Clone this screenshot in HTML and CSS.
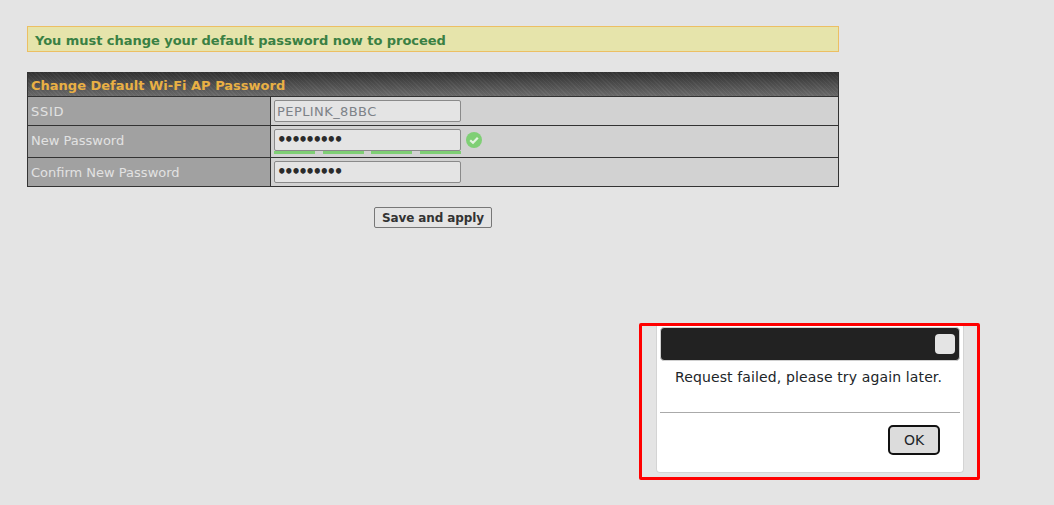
FILE: index.html
```html
<!DOCTYPE html>
<html lang="en">
<head>
<meta charset="utf-8">
<title>Change Default Wi-Fi AP Password</title>
<link rel="stylesheet" href="styles.css">
</head>
<body>
<main class="page">
  <div class="notice">You must change your default password now to proceed</div>
  <form class="panel" onsubmit="return false">
    <div class="panel-title">Change Default Wi-Fi AP Password</div>
    <div class="row row-ssid">
      <label class="row-label">SSID</label>
      <div class="row-field"><input class="text-input is-muted" type="text" value="PEPLINK_8BBC"></div>
    </div>
    <div class="row row-new">
      <label class="row-label">New Password</label>
      <div class="row-field">
        <div class="input-wrap">
          <input class="text-input is-secret" type="password" value="123456789">
          <div class="strength"><span></span><span></span><span></span><span></span></div>
        </div>
        <svg class="check" width="16" height="16" viewBox="0 0 16 16" aria-hidden="true">
          <circle cx="8" cy="8" r="8" fill="#7fcf75"/>
          <path d="M4.2 8.2 7 10.8 11.8 5.7" fill="none" stroke="#e4f3e1" stroke-width="2.2"/>
        </svg>
      </div>
    </div>
    <div class="row row-confirm">
      <label class="row-label">Confirm New Password</label>
      <div class="row-field"><input class="text-input is-secret" type="password" value="123456789"></div>
    </div>
  </form>
  <div class="actions"><button class="save-btn" type="button">Save and apply</button></div>
</main>
<div class="highlight">
  <div class="dialog">
    <div class="dialog-head"><span class="dialog-close"></span></div>
    <p class="dialog-text">Request failed, please try again later.</p>
    <div class="dialog-foot"><button class="ok-btn" type="button">OK</button></div>
  </div>
</div>
</body>
</html>
```
FILE: styles.css
```css
* { box-sizing: border-box; }
html, body { height: 100%; }
body {
  margin: 0;
  background: #e4e4e4;
  font-family: "DejaVu Sans", Verdana, sans-serif;
  font-size: 13px;
  color: #333;
  overflow: hidden;
}
.page { width: 812px; margin-left: 27px; padding-top: 26px; }
.notice {
  height: 26px;
  line-height: 27px;
  padding-left: 7px;
  background: #e6e4ab;
  border: 1px solid #ecbf63;
  color: #3a8043;
  font-weight: bold;
  letter-spacing: -.04px;
}
.panel {
  margin-top: 20px;
  border: 1px solid #333;
  border-top: 0;
  background: #d2d2d2;
}
.panel-title {
  height: 25px;
  line-height: 27px;
  padding-left: 3px;
  border-bottom: 1px solid #333;
  color: #e9b044;
  font-weight: bold;
  background:
    repeating-linear-gradient(45deg, rgba(255,255,255,.035) 0 1px, rgba(0,0,0,.03) 1px 3px),
    linear-gradient(#323232, #6c6c6c);
}
.row {
  display: grid;
  grid-template-columns: 243px 1fr;
  border-bottom: 1px solid #333;
}
.row:last-child { border-bottom: 0; }
.row-ssid { height: 29px; }
.row-new { height: 32px; }
.row-confirm { height: 28px; }
.row-label {
  display: flex;
  align-items: center;
  padding-left: 3px;
  background: #a1a1a1;
  border-right: 1px solid #333;
  color: #e2e2e2;
}
.row-new .row-label { padding-bottom: 2px; }
.row-ssid .row-label { letter-spacing: .7px; }
.row-field {
  display: flex;
  align-items: flex-start;
  padding: 3px 0 0 3px;
}
.input-wrap { width: 187px; }
.text-input {
  display: block;
  width: 187px;
  height: 22px;
  padding: 0 2px;
  margin: 0;
  border: 1px solid #8a8a8a;
  border-radius: 2px;
  background: #e4e4e4;
  font-family: inherit;
  font-size: 13px;
  color: #222;
  outline: 0;
}
.is-muted { color: #7d8288; letter-spacing: .42px; }
.is-secret { font-size: 15px; font-weight: bold; letter-spacing: -2.5px; color: #2b2b2b; }
.strength {
  display: flex;
  justify-content: space-between;
  height: 3px;
}
.strength span { width: 41px; background: #7fcf75; }
.check { margin: 3px 0 0 5px; }
.actions {
  display: flex;
  padding: 20px 0 0 347px;
}
.save-btn {
  width: 118px;
  height: 21px;
  padding: 0;
  border: 1px solid #777;
  border-radius: 2px;
  background: #e4e4e4;
  font-family: inherit;
  font-size: 12px;
  font-weight: bold;
  letter-spacing: -.1px;
  color: #333;
}
.highlight {
  position: absolute;
  left: 639px;
  top: 323px;
  width: 341px;
  height: 157px;
  border: 3px solid #f00;
  border-radius: 2px;
  padding-left: 14px;
}
.dialog {
  width: 308px;
  height: 147px;
  padding: 1px 3px 0;
  background: #fff;
  border: 1px solid #d4d4d4;
  border-top: 0;
  border-radius: 0 0 4px 4px;
}
.dialog-head {
  display: flex;
  justify-content: flex-end;
  align-items: center;
  height: 34px;
  padding-right: 4px;
  background: #222;
  border: 1px solid #d0d0d0;
  border-radius: 4px;
}
.dialog-close {
  width: 20px;
  height: 20px;
  background: #e4e4e4;
  border-radius: 4px;
}
.dialog-text {
  margin: 0;
  height: 52px;
  padding: 7px 3px 0 0;
  border-bottom: 1px solid #aaa;
  text-align: center;
  font-size: 14px;
  letter-spacing: .13px;
  line-height: 18px;
  color: #212529;
}
.dialog-foot {
  display: flex;
  justify-content: flex-end;
  padding: 12px 20px 0 0;
}
.ok-btn {
  width: 52px;
  height: 30px;
  padding: 0;
  border: 2px solid #111;
  border-radius: 5px;
  background: #dcdcdc;
  font-family: inherit;
  font-size: 14px;
  color: #212529;
}
```
